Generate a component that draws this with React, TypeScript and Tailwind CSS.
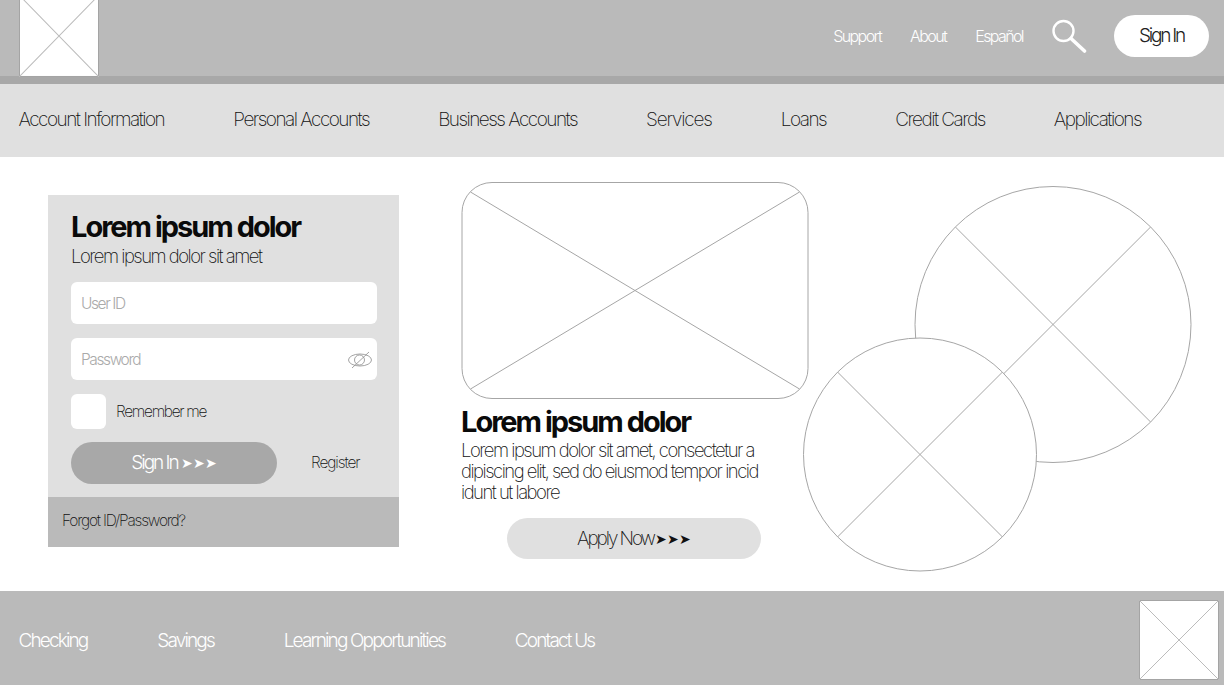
const font = "font-['Inter',sans-serif]";

const navItems = [
  "Account Information",
  "Personal Accounts",
  "Business Accounts",
  "Services",
  "Loans",
  "Credit Cards",
  "Applications",
];

const footerLinks = ["Checking", "Savings", "Learning Opportunities", "Contact Us"];

function BoxPlaceholder({ className }: { className: string }) {
  return (
    <svg viewBox="0 0 80 80" preserveAspectRatio="none" className={className}>
      <rect x="0.5" y="0.5" width="79" height="79" fill="#fff" stroke="#a4a4a4" />
      <path d="M0 0L80 80M80 0L0 80" stroke="#bcbcbc" strokeWidth="1" />
    </svg>
  );
}

function SearchIcon() {
  return (
    <svg width="36" height="36" viewBox="0 0 36 36" fill="none" stroke="#fff" strokeLinecap="round">
      <circle cx="12.5" cy="13" r="10" strokeWidth="2.4" />
      <path d="M20 20.5L33.5 33" strokeWidth="3.6" />
    </svg>
  );
}

function EyeOff() {
  return (
    <svg width="26" height="20" viewBox="0 0 26 20" fill="none" stroke="#8c8c8c" strokeWidth="0.8">
      <ellipse cx="13" cy="10" rx="11.5" ry="6" />
      <circle cx="12.5" cy="10" r="5" />
      <path d="M5 18L22 2" />
    </svg>
  );
}

function Hero() {
  return (
    <svg width="348" height="217" viewBox="0 0 348 217" fill="none" className="block">
      <rect x="1" y="0.5" width="346" height="216" rx="30" fill="#fff" stroke="#a6a6a6" />
      <path d="M9.5 10L338.5 207M338.5 10L9.5 207" stroke="#a6a6a6" />
    </svg>
  );
}

function Circles() {
  return (
    <svg width="390" height="386" viewBox="0 0 390 386" fill="none" className="block">
      <circle cx="250" cy="138.5" r="138" fill="#fff" stroke="#a6a6a6" />
      <path d="M152.4 41L347.6 236M347.6 41L152.4 236" stroke="#a6a6a6" />
      <circle cx="117" cy="268.5" r="116.5" fill="#fff" stroke="#a6a6a6" />
      <path d="M34.5 186L199.5 351M199.5 186L34.5 351" stroke="#a6a6a6" />
    </svg>
  );
}

export default function App() {
  return (
    <div className={`${font} flex h-[685px] w-[1224px] flex-col overflow-hidden bg-white font-extralight`}>
      {/* top bar */}
      <header className="flex h-[84px] shrink-0 items-center border-b-8 border-[#a8a8a8] bg-[#bababa] pl-[19px] pr-[15px]">
        <BoxPlaceholder className="mb-[-1px] h-[82px] w-[80px] self-end" />
        <div className="mb-[4px] ml-auto flex items-center text-[16px] font-light tracking-[-1.6px] text-white">
          <span>Support</span>
          <span className="ml-[29px]">About</span>
          <span className="ml-[29px]">Español</span>
          <span className="ml-[28px]">
            <SearchIcon />
          </span>
          <button className="ml-[27px] flex h-[42px] w-[95px] items-center justify-center rounded-full bg-white text-[19px] tracking-[-2.2px] text-[#222]">
            Sign In
          </button>
        </div>
      </header>

      {/* main nav */}
      <nav className="flex h-[73px] shrink-0 items-center gap-[69.1px] bg-[#e0e0e0] pl-[18.5px] text-[19px] tracking-[-1.53px] text-[#111]">
        {navItems.map((item) => (
          <span key={item} className={item === "Services" ? "tracking-[-1.2px]" : ""}>
            {item}
          </span>
        ))}
      </nav>

      <main className="flex flex-1 items-start pl-[48px]">
        {/* login card */}
        <section className="mt-[38px] w-[351px] bg-[#e0e0e0]">
          <div className="pl-[23px] pt-[14px]">
            <h2 className="text-[29px] font-bold leading-[35px] tracking-[-2px] text-[#0a0a0a]">Lorem ipsum dolor</h2>
            <p className="text-[18.5px] leading-[24px] tracking-[-1.5px] text-[#111]">Lorem ipsum dolor sit amet</p>
            <div className="mt-[14px] flex h-[42px] w-[306px] items-center rounded-[6px] bg-white px-[10px] pt-[2px] text-[15.5px] font-light tracking-[-1.4px] text-[#aaa]">
              User ID
            </div>
            <div className="mt-[14px] flex h-[42px] w-[306px] items-center justify-between rounded-[6px] bg-white pl-[10px] pr-[4px] pt-[2px] text-[15.5px] font-light tracking-[-1.4px] text-[#aaa]">
              Password
              <EyeOff />
            </div>
            <div className="mt-[14px] flex items-center gap-[10px]">
              <div className="h-[35px] w-[35px] rounded-[6px] bg-white" />
              <span className="text-[15.5px] tracking-[-1.3px] text-[#111]">Remember me</span>
            </div>
            <div className="mt-[13px] flex items-center">
              <button className="flex h-[42px] w-[206px] items-center justify-center rounded-full bg-[#a8a8a8] text-[19px] font-light tracking-[-2px] text-white">
                Sign In<span className="ml-[3px] font-['DejaVu_Sans',sans-serif] text-[14px] tracking-normal">➤➤➤</span>
              </button>
              <span className="ml-[34px] text-[15.5px] tracking-[-1.1px] text-[#111]">Register</span>
            </div>
          </div>
          <div className="mt-[13px] flex h-[50px] items-center bg-[#bababa] pb-[2px] pl-[14px] text-[15.5px] tracking-[-1.2px] text-[#111]">
            Forgot ID/Password?
          </div>
        </section>

        {/* promo */}
        <section className="ml-[62px] mt-[25px] w-[347px]">
          <Hero />
          <h2 className="mt-[5px] text-[29px] font-bold leading-[36px] tracking-[-2px] text-[#0a0a0a]">Lorem ipsum dolor</h2>
          <p className="text-[18.5px] leading-[21px] tracking-[-1.5px] text-[#111]">
            Lorem ipsum dolor sit amet, consectetur a
            <br />
            dipiscing elit, sed do eiusmod tempor incid
            <br />
            idunt ut labore
          </p>
          <button className="ml-[46px] mt-[15px] flex h-[41px] w-[254px] items-center justify-center rounded-full bg-[#e0e0e0] pt-[2px] text-[19px] tracking-[-2.1px] text-[#111]">
            Apply Now<span className="ml-[1px] font-['DejaVu_Sans',sans-serif] text-[14px] tracking-normal text-[#111]">➤➤➤</span>
          </button>
        </section>

        <section className="ml-[-5px] mt-[29px] shrink-0">
          <Circles />
        </section>
      </main>

      {/* footer */}
      <footer className="flex h-[94px] shrink-0 items-center justify-between bg-[#bababa] pl-[18.5px] pr-[5px] pt-[4px]">
        <div className="mt-[2px] flex gap-[69.8px] text-[19px] font-light tracking-[-1.85px] text-white">
          {footerLinks.map((link) => (
            <span key={link}>{link}</span>
          ))}
        </div>
        <BoxPlaceholder className="h-[80px] w-[80px]" />
      </footer>
    </div>
  );
}
